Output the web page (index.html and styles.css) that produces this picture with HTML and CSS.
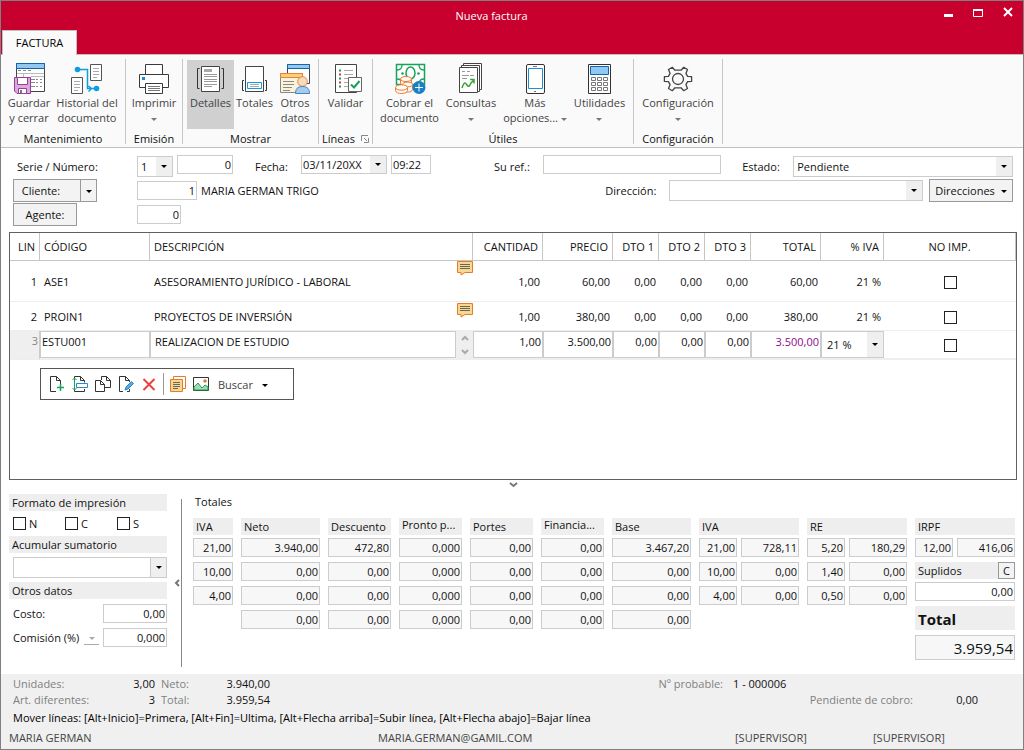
FILE: index.html
```
<!DOCTYPE html>
<html lang="es">
<head>
<meta charset="utf-8">
<title>Nueva factura</title>
<link rel="stylesheet" href="styles.css">
</head>
<body>
<div class="window">
  <header class="titlebar">
    <div class="title-row">
      <h1 class="title">Nueva factura</h1>
      <div class="win-controls">
        <button type="button" class="win-btn" aria-label="Minimizar"><svg width="12" height="12" viewBox="0 0 12 12"><path d="M2 7h9v3h-9z" fill="#fff"/></svg></button>
        <button type="button" class="win-btn" aria-label="Maximizar"><svg width="12" height="12" viewBox="0 0 12 12"><path d="M1.500 3.500h9v6h-9z" fill="none" stroke="#fff"/><path d="M1 2h10v2H1z" fill="#fff"/></svg></button>
        <button type="button" class="win-btn" aria-label="Cerrar"><svg width="12" height="12" viewBox="0 0 12 12"><path d="M2 1l8 8M10 1l-8 8" fill="none" stroke="#fff" stroke-width="2"/></svg></button>
      </div>
    </div>
    <nav class="tabs"><button type="button" class="tab">FACTURA</button></nav>
  </header>

  <div class="ribbon">
    <section class="group g-mant">
      <div class="tools">
        <button type="button" class="tool t-guardar">
          <svg width="32" height="32" viewBox="0 0 32 32" fill="none"><path d="M3.500 1.500h28v28h-28z" fill="#fff" stroke="#444"/><path d="M3.500 1.500h28v5h-28z" fill="#92c8f0" stroke="#1464ac"/><path d="M5 8.500h3M10 8.500h3M15 8.500h3M18 17.500h4M23 17.500h2M27 17.500h2M18 20.500h4M23 20.500h2M27 20.500h2M18 24.500h4M23 24.500h2M27 24.500h2" stroke="#888"/><path d="M4 11.500h27M10.500 11v4M18 14.500h13" stroke="#bbb"/><path d="M1.500 15.500h16v16H4l-2.500-2.500z" fill="#dda9dc" stroke="#92409a"/><path d="M4.500 15.500h10v7h-10zM5.500 26.500h8v5h-8z" fill="#fff" stroke="#92409a"/><path d="M8 28v3" stroke="#777" stroke-width="2"/></svg>
          <span>Guardar<br>y cerrar</span></button>
        <button type="button" class="tool t-hist">
          <svg width="32" height="32" viewBox="0 0 32 32" fill="none"><path d="M19.500 2.500h11v16h-11zM.5 15.500h11v16H.5z" fill="#fff" stroke="#555"/><path d="M22 6.500h6M22 9.500h6M22 12.500h6M22 15.500h4M3 19.500h6M3 22.500h6M3 25.500h6M3 28.500h4" stroke="#aaa"/><path d="M6 7.500h10.500v19H26M17.500 24l3 2.500-3 3" stroke="#0c9ee0" stroke-width="1.500"/><circle cx="6.500" cy="7.500" r="2.800" fill="#0c9ee0"/><circle cx="25.500" cy="26.500" r="2.800" fill="#0c9ee0"/></svg>
          <span>Historial del<br>documento</span></button>
      </div>
      <h2>Mantenimiento</h2>
    </section>
    <section class="group g-emis">
      <div class="tools">
        <button type="button" class="tool t-wide">
          <svg width="32" height="32" viewBox="0 0 32 32" fill="none" stroke="#3a3a3a"><path d="M7.500 12.500v-10h17v10" fill="#fff"/><path d="M7.500 25.500h-6v-13h29v13h-6" fill="#fff"/><path d="M7.500 21.500h17v10h-17z" fill="#fff"/><path d="M10 24.500h12M10 26.500h12M10 28.500h12" stroke="#777"/><path d="M4 15h3v3H4z" fill="#1f8dd2" stroke="none"/></svg>
          <span>Imprimir<br><i class="caret"></i></span></button>
      </div>
      <h2>Emisión</h2>
    </section>
    <section class="group g-most">
      <div class="tools">
        <button type="button" class="tool t-det active" aria-pressed="true">
          <svg width="32" height="32" viewBox="0 0 32 32" fill="none"><path d="M6.500 4.500h18v25h-18z" fill="#fff" stroke="#444"/><path d="M9 7h8v3H9z" fill="#aaa"/><path d="M9 12.500h13M9 14.500h13M9 17.500h13M9 19.500h13M9 22.500h13M9 24.500h8" stroke="#999"/><path d="M4.500 6.500h-2v20h2M26.500 6.500h2v20h-2" stroke="#333"/></svg>
          <span>Detalles</span></button>
        <button type="button" class="tool t-tot">
          <svg width="32" height="32" viewBox="0 0 32 32" fill="none"><path d="M6.500 4.500h18v25h-18z" fill="#fff" stroke="#444"/><path d="M8.500 20.500h14v6h-14z" fill="#fff" stroke="#0c9ee0"/><path d="M11 22.500h9M11 24.500h9" stroke="#aaa"/><path d="M5 18.500H3.500v10H5M26 18.500h1.500v10H26" stroke="#333"/></svg>
          <span>Totales</span></button>
        <button type="button" class="tool t-otros">
          <svg width="32" height="32" viewBox="0 0 32 32" fill="none"><path d="M8.500 2.500h22v19h-22z" fill="#fff" stroke="#444"/><path d="M8.500 2.500h22v4h-22z" fill="#92c8f0" stroke="#1464ac"/><path d="M1.500 11.500h22v19h-22z" fill="#fcf3da" stroke="#888"/><path d="M1.500 11.500h22v4h-22z" fill="#f8cf77" stroke="#e88239"/><path d="M4 19.500h11M4 22.500h11M4 25.500h9M4 28.500h7" stroke="#888"/><circle cx="23.500" cy="19.500" r="4.800" fill="#fadab8" stroke="#d58a55"/><path d="M16.500 31.500c0-4.500 2-7 7-7s7 2.500 7 7z" fill="#a7cbea" stroke="#4287c0"/></svg>
          <span>Otros<br>datos</span></button>
      </div>
      <h2>Mostrar</h2>
    </section>
    <section class="group g-lin">
      <div class="tools">
        <button type="button" class="tool t-wide">
          <svg width="32" height="32" viewBox="0 0 32 32" fill="none"><path d="M5.500 2.500h21v28h-21z" fill="#fff" stroke="#444"/><path d="M14 8.500h9M14 12.500h9M14 16.500h6M14 20.500h4M14 24.500h4" stroke="#aaa"/><path d="M9 8.500h2M9 16.500h2M9 24.500h2" stroke="#17a05a" stroke-width="2"/><path d="M9 12.500h2M9 20.500h2" stroke="#d8304c" stroke-width="2"/><path d="M18.500 15.500h13v14h-13z" fill="#fff" stroke="#666"/><path d="M21 22.500l3 3 5.500-6.500" stroke="#17a05a" stroke-width="2"/></svg>
          <span>Validar</span></button>
      </div>
      <h2>Líneas <svg width="8" height="8" viewBox="0 0 8 8" fill="none" stroke="#888"><path d="M.5 6V.5H7M3 3l3 3M7.500 3v4.500H3"/></svg></h2>
    </section>
    <section class="group g-util">
      <div class="tools">
        <button type="button" class="tool t-cobrar">
          <svg width="32" height="32" viewBox="0 0 32 32" fill="none"><path d="M2.500 2.500h28v20h-28z" fill="#fff" stroke="#18a35b" stroke-width="1.500"/><path d="M3 8c3 0 5-2 5-5M25 3c0 3 2 5 5 5M3 17c3 0 5 2 5 5M25 22c0-3 2-5 5-5" stroke="#18a35b" stroke-width="1.300"/><ellipse cx="16.500" cy="11" rx="4.500" ry="6" stroke="#18a35b" stroke-width="1.500"/><circle cx="8.500" cy="11.500" r="1.300" fill="#18a35b"/><circle cx="24.500" cy="11.500" r="1.300" fill="#18a35b"/><g fill="#fffaf4" stroke="#e97c34"><path d="M6.500 17v4c0 3.500 11 3.500 11 0v-4"/><ellipse cx="12" cy="17" rx="5.500" ry="2.500"/><path d="M8.500 22.500v5c0 3.500 10 3.500 10 0v-5"/><ellipse cx="13.500" cy="22.500" rx="5" ry="2.300"/><path d="M1.500 25.500v3c0 4 12 4 12 0v-3"/><ellipse cx="7.500" cy="25.500" rx="6" ry="2.700"/></g><circle cx="25" cy="25.500" r="6.500" fill="#1681c4"/><path d="M21 25.500h8M25 21.500v8" stroke="#fff"/></svg>
          <span>Cobrar el<br>documento</span></button>
        <button type="button" class="tool t-cons">
          <svg width="32" height="32" viewBox="0 0 32 32" fill="none"><g fill="#fff" stroke="#444"><path d="M8.500 1.500h18v26h-18z"/><path d="M6.500 3.500h18v26h-18z"/><path d="M4.500 5.500h18v25h-18z"/></g><path d="M7 9.500h3M12 9.500h3M7 13.500h7M15 13.500h4M7 16.500h5" stroke="#999"/><path d="M7 26c2-6 3-6 5-3s3 0 4-2l3-3M15 17.500h4v4" stroke="#3aa536" stroke-width="1.500"/></svg>
          <span>Consultas<br><i class="caret"></i></span></button>
        <button type="button" class="tool t-mas">
          <svg width="32" height="32" viewBox="0 0 32 32" fill="none"><rect x="7.500" y="2.500" width="18" height="29" rx="1.500" fill="#fff" stroke="#333"/><path d="M9.500 6.500h14v20h-14z" fill="#fff" stroke="#1f8dd2"/><path d="M14 4.500h4M15 29.500h2" stroke="#777"/></svg>
          <span>Más<br>opciones... <i class="caret"></i></span></button>
        <button type="button" class="tool t-utl">
          <svg width="32" height="32" viewBox="0 0 32 32" fill="none"><path d="M4.500 2.500h22v29h-22z" fill="#fff" stroke="#333"/><path d="M6.500 4.500h18v8h-18z" fill="#8fc8f2" stroke="#1464ac"/><path d="M7.500 15.500h4v3h-4zM13.500 15.500h4v3h-4zM19.500 15.500h4v3h-4zM7.500 20.500h4v3h-4zM13.500 20.500h4v3h-4zM19.500 20.500h4v3h-4zM7.500 25.500h4v3h-4zM13.500 25.500h4v3h-4zM19.500 25.500h4v3h-4z" stroke="#777"/></svg>
          <span>Utilidades<br><i class="caret"></i></span></button>
      </div>
      <h2>Útiles</h2>
    </section>
    <section class="group g-conf">
      <div class="tools">
        <button type="button" class="tool t-wide">
          <svg width="32" height="32" viewBox="0 0 32 32" fill="none" stroke="#444"><path d="M29.600 14.600L29.600 19.400L25.600 19.600L23.900 22.600L25.500 26.500L21.700 28.700L19.100 25.800L12.900 25.800L10.300 28.700L6.500 26.500L8.100 22.600L6.400 19.600L2.400 19.400L2.400 14.600L6.400 14.400L8.100 11.400L6.500 7.500L10.300 5.300L12.900 8.200L19.100 8.200L21.700 5.300L25.500 7.500L23.900 11.400L25.600 14.400Z" fill="#fafafa" stroke-width="1.300" stroke-linejoin="round"/><circle cx="16" cy="17" r="5.500" stroke-width="1.300"/></svg>
          <span>Configuración<br><i class="caret"></i></span></button>
      </div>
      <h2>Configuración</h2>
    </section>
  </div>

  <main>
    <form class="form">
      <div class="row">
        <label class="lead" for="serie">Serie / Número:</label>
        <span class="combo c-serie"><select id="serie"><option>1</option></select><i class="drop"></i></span>
        <input class="field num f-numero" aria-label="Número" value="0">
        <label class="l-fecha" for="fecha">Fecha:</label>
        <span class="combo c-fecha"><input id="fecha" value="03/11/20XX"><i class="drop"></i></span>
        <input class="field f-hora" aria-label="Hora" value="09:22">
        <label class="l-ref" for="ref">Su ref.:</label>
        <input class="field f-ref" id="ref">
        <label class="l-estado" for="estado">Estado:</label>
        <span class="combo c-estado"><select id="estado"><option>Pendiente</option></select><i class="drop"></i></span>
      </div>
      <div class="row">
        <div class="lead split"><button type="button" class="btn b-cliente">Cliente:</button><button type="button" class="btn b-drop" aria-label="Opciones de cliente"><i class="tri"></i></button></div>
        <input class="field num f-cliente" aria-label="Cliente" value="1">
        <span class="cliente">MARIA GERMAN TRIGO</span>
        <label class="l-dir" for="dir">Dirección:</label>
        <span class="combo c-dir"><select id="dir"></select><i class="drop"></i></span>
        <button type="button" class="btn b-dir">Direcciones <i class="tri"></i></button>
      </div>
      <div class="row">
        <div class="lead split"><button type="button" class="btn b-agente">Agente:</button></div>
        <input class="field num f-agente" aria-label="Agente" value="0">
      </div>
    </form>

    <section class="lines">
      <table>
        <colgroup><col class="k-lin"><col class="k-cod"><col><col class="k-70"><col class="k-70"><col class="k-46"><col class="k-46"><col class="k-46"><col class="k-70"><col class="k-iva"><col class="k-imp"></colgroup>
        <thead><tr><th class="num">LIN</th><th>CÓDIGO</th><th>DESCRIPCIÓN</th><th class="num">CANTIDAD</th><th class="num">PRECIO</th><th class="num">DTO 1</th><th class="num">DTO 2</th><th class="num">DTO 3</th><th class="num">TOTAL</th><th class="num">% IVA</th><th class="mid">NO IMP.</th></tr></thead>
        <tbody>
          <tr class="tall"><td class="num">1</td><td>ASE1</td><td><div class="desc"><span>ASESORAMIENTO JURÍDICO - LABORAL</span><svg class="note" width="16" height="15" viewBox="0 0 16 15"><path d="M.5 .5h15v11H8l-4 2.500v-2.500H.5z" fill="#f9d88b" stroke="#e47a34"/><path d="M3 3.500h10M3 5.500h10M3 7.500h10" stroke="#666"/></svg></div></td><td class="num">1,00</td><td class="num">60,00</td><td class="num">0,00</td><td class="num">0,00</td><td class="num">0,00</td><td class="num">60,00</td><td class="num">21 %</td><td class="mid"><input type="checkbox" aria-label="No imprimir línea 1"></td></tr>
          <tr class="short"><td class="num">2</td><td>PROIN1</td><td><div class="desc"><span>PROYECTOS DE INVERSIÓN</span><svg class="note" width="16" height="15" viewBox="0 0 16 15"><path d="M.5 .5h15v11H8l-4 2.500v-2.500H.5z" fill="#f9d88b" stroke="#e47a34"/><path d="M3 3.500h10M3 5.500h10M3 7.500h10" stroke="#666"/></svg></div></td><td class="num">1,00</td><td class="num">380,00</td><td class="num">0,00</td><td class="num">0,00</td><td class="num">0,00</td><td class="num">380,00</td><td class="num">21 %</td><td class="mid"><input type="checkbox" aria-label="No imprimir línea 2"></td></tr>
          <tr class="edit"><td class="num lin">3</td><td><input class="cell" aria-label="Código" value="ESTU001"></td><td><div class="desc-edit"><input class="cell" aria-label="Descripción" value="REALIZACION DE ESTUDIO"><span class="spin"><svg width="10" height="20" viewBox="0 0 10 20" fill="none" stroke="#aaa" stroke-width="2"><path d="M2 5l3-3 3 3M2 15l3 3 3-3"/></svg></span></div></td><td><input class="cell num" aria-label="Cantidad" value="1,00"></td><td><input class="cell num" aria-label="Precio" value="3.500,00"></td><td><input class="cell num" aria-label="Dto 1" value="0,00"></td><td><input class="cell num" aria-label="Dto 2" value="0,00"></td><td><input class="cell num" aria-label="Dto 3" value="0,00"></td><td><input class="cell num total" aria-label="Total" value="3.500,00"></td><td><span class="combo c-iva"><select aria-label="% IVA"><option>21 %</option></select><i class="drop"></i></span></td><td class="mid white"><input type="checkbox" aria-label="No imprimir línea 3"></td></tr>
        </tbody>
      </table>
      <div class="linebar" role="toolbar" aria-label="Línea">
        <button type="button" aria-label="Nueva línea"><svg width="16" height="16" viewBox="0 0 16 16" fill="none"><path d="M7 15.500H1.500V.5h6l4 4V9M7.500 .5v4h4" stroke="#333"/><path d="M8 11.500h7M11.500 8v7" stroke="#18a35b" stroke-width="1.500"/></svg></button>
        <button type="button" aria-label="Insertar línea"><svg width="16" height="16" viewBox="0 0 16 16" fill="none"><path d="M2.500 4.500v-4h6l4 4v2M8.500 .5v4h4M2.500 13v2.500h10V13" stroke="#333"/><path d="M4.500 7.500h11v4h-11z" stroke="#1f8dd2" fill="#fff"/><path d="M2.500 2v12M.5 4l2-2 2 2M.5 12l2 2 2-2" stroke="#18a35b"/></svg></button>
        <button type="button" aria-label="Duplicar línea"><svg width="16" height="16" viewBox="0 0 16 16" fill="none" stroke="#333"><path d="M6.500 4V.5h5l4 4v7H10M11.500 .5v4h4"/><path d="M.5 4.500h5l4 4v7h-9zM5.500 4.500v4h4" fill="#fff"/></svg></button>
        <button type="button" aria-label="Modificar línea"><svg width="16" height="16" viewBox="0 0 16 16" fill="none"><path d="M5 15.500H1.500V.5h6l4 4V6M7.500 .5v4h4M9 15.500h2.500V13" stroke="#333"/><path d="M7 14l1-3 5.500-5.500 2 2L10 13z" fill="#5aa9e4" stroke="#2a84c8"/></svg></button>
        <button type="button" aria-label="Eliminar línea"><svg width="16" height="16" viewBox="0 0 16 16" fill="none"><path d="M2.500 3l11 11M13.500 3l-11 11" stroke="#e8423e" stroke-width="2"/></svg></button>
        <i class="bar"></i>
        <button type="button" aria-label="Notas"><svg width="16" height="16" viewBox="0 0 16 16" fill="none"><path d="M3.500 3V.5h12v12H13" stroke="#e47a34"/><path d="M.5 3.500h12v12H.5z" fill="#f9d88b" stroke="#e47a34"/><path d="M3 6.500h7M3 8.500h7M3 10.500h7M3 12.500h5" stroke="#666"/></svg></button>
        <button type="button" aria-label="Imagen"><svg width="16" height="16" viewBox="0 0 16 16" fill="none"><path d="M.5 1.500h15v13H.5z" fill="#fff" stroke="#333"/><path d="M1 11l4-4 4 5 3-3 3 2v3H1z" fill="#a7d8b4" stroke="#18a35b"/><circle cx="12" cy="5" r="1.800" fill="#e47a34"/></svg></button>
        <button type="button" class="buscar">Buscar <i class="tri"></i></button>
      </div>
    </section>

    <div class="fold"><svg width="9" height="6" viewBox="0 0 9 6" fill="none" stroke="#777" stroke-width="2"><path d="M1 1l3.500 3L8 1"/></svg></div>

    <div class="bottom">
      <aside class="side">
        <h3 class="head">Formato de impresión</h3>
        <div class="checks"><label><input type="checkbox">N</label><label><input type="checkbox">C</label><label><input type="checkbox">S</label></div>
        <h3 class="head">Acumular sumatorio</h3>
        <span class="combo c-acum"><select aria-label="Acumular sumatorio"></select><i class="drop"></i></span>
        <h3 class="head">Otros datos</h3>
        <div class="pair"><label for="costo">Costo:</label><input class="field num" id="costo" value="0,00"></div>
        <div class="pair"><label for="comis">Comisión (%)</label><button type="button" class="mini" aria-label="Tipo de comisión"><i class="caret"></i></button><input class="field num" id="comis" value="0,000"></div>
      </aside>
      <div class="divider"><svg width="6" height="8" viewBox="0 0 6 8" fill="none" stroke="#777" stroke-width="2"><path d="M5 1L2 4l3 3"/></svg></div>
      <section class="totals">
        <h3>Totales</h3>
        <div class="cols">
          <div class="col"><h4 class="head">IVA</h4><input class="ro" readonly aria-label="IVA 1" value="21,00"><input class="ro" readonly aria-label="IVA 2" value="10,00"><input class="ro" readonly aria-label="IVA 3" value="4,00"></div>
          <div class="col"><h4 class="head">Neto</h4><input class="ro" readonly aria-label="Neto 1" value="3.940,00"><input class="ro" readonly aria-label="Neto 2" value="0,00"><input class="ro" readonly aria-label="Neto 3" value="0,00"><input class="ro" readonly aria-label="Neto 4" value="0,00"></div>
          <div class="col"><h4 class="head">Descuento</h4><input class="ro" readonly aria-label="Descuento 1" value="472,80"><input class="ro" readonly aria-label="Descuento 2" value="0,00"><input class="ro" readonly aria-label="Descuento 3" value="0,00"><input class="ro" readonly aria-label="Descuento 4" value="0,00"></div>
          <div class="col"><h4 class="head high">Pronto p...</h4><input class="ro" readonly aria-label="Pronto pago 1" value="0,000"><input class="ro" readonly aria-label="Pronto pago 2" value="0,000"><input class="ro" readonly aria-label="Pronto pago 3" value="0,000"><input class="ro" readonly aria-label="Pronto pago 4" value="0,000"></div>
          <div class="col"><h4 class="head">Portes</h4><input class="ro" readonly aria-label="Portes 1" value="0,00"><input class="ro" readonly aria-label="Portes 2" value="0,00"><input class="ro" readonly aria-label="Portes 3" value="0,00"><input class="ro" readonly aria-label="Portes 4" value="0,00"></div>
          <div class="col"><h4 class="head high">Financia...</h4><input class="ro" readonly aria-label="Financiación 1" value="0,00"><input class="ro" readonly aria-label="Financiación 2" value="0,00"><input class="ro" readonly aria-label="Financiación 3" value="0,00"><input class="ro" readonly aria-label="Financiación 4" value="0,00"></div>
          <div class="col"><h4 class="head">Base</h4><input class="ro" readonly aria-label="Base 1" value="3.467,20"><input class="ro" readonly aria-label="Base 2" value="0,00"><input class="ro" readonly aria-label="Base 3" value="0,00"><input class="ro" readonly aria-label="Base 4" value="0,00"></div>
          <div class="col"><h4 class="head">IVA</h4>
            <div class="two"><input class="ro" readonly aria-label="Tipo IVA 1" value="21,00"><input class="ro" readonly aria-label="Cuota IVA 1" value="728,11"></div>
            <div class="two"><input class="ro" readonly aria-label="Tipo IVA 2" value="10,00"><input class="ro" readonly aria-label="Cuota IVA 2" value="0,00"></div>
            <div class="two"><input class="ro" readonly aria-label="Tipo IVA 3" value="4,00"><input class="ro" readonly aria-label="Cuota IVA 3" value="0,00"></div></div>
          <div class="col"><h4 class="head">RE</h4>
            <div class="two"><input class="ro" readonly aria-label="Tipo RE 1" value="5,20"><input class="ro" readonly aria-label="Cuota RE 1" value="180,29"></div>
            <div class="two"><input class="ro" readonly aria-label="Tipo RE 2" value="1,40"><input class="ro" readonly aria-label="Cuota RE 2" value="0,00"></div>
            <div class="two"><input class="ro" readonly aria-label="Tipo RE 3" value="0,50"><input class="ro" readonly aria-label="Cuota RE 3" value="0,00"></div></div>
          <div class="col"><h4 class="head">IRPF</h4>
            <div class="two"><input class="ro" readonly aria-label="Tipo IRPF" value="12,00"><input class="ro" readonly aria-label="Cuota IRPF" value="416,06"></div>
            <div class="head suplidos"><label for="suplidos">Suplidos</label><button type="button" class="btn b-c">C</button></div>
            <input class="ro supl" id="suplidos" value="0,00">
            <label class="head grand" for="total">Total</label>
            <input class="ro big" readonly id="total" value="3.959,54"></div>
        </div>
      </section>
    </div>
  </main>

  <footer class="status">
    <dl class="facts">
      <dt>Unidades:</dt><dd>3,00</dd><dt>Neto:</dt><dd>3.940,00</dd><dt class="end">Nº probable:</dt><dd class="start">1 - 000006</dd>
    </dl>
    <dl class="facts second">
      <dt>Art. diferentes:</dt><dd>3</dd><dt>Total:</dt><dd>3.959,54</dd><dt class="end">Pendiente de cobro:</dt><dd>0,00</dd>
    </dl>
    <p class="hint">Mover líneas: [Alt+Inicio]=Primera, [Alt+Fin]=Ultima, [Alt+Flecha arriba]=Subir línea, [Alt+Flecha abajo]=Bajar línea</p>
    <div class="users"><span>MARIA GERMAN</span><span>MARIA.GERMAN@GAMIL.COM</span><span>[SUPERVISOR]</span><span>[SUPERVISOR]</span></div>
  </footer>
</div>
</body>
</html>
```
FILE: styles.css
```
* { box-sizing: border-box; }
body { margin: 0; background: #fff; color: #111; font: 11px/15px "Open Sans", "Noto Sans", sans-serif; }
button, input, select { font: inherit; color: inherit; margin: 0; padding: 0; border: 0; border-radius: 0; background: none; min-width: 0; }
select { appearance: none; }
h1, h2, h3, h4, p, dl, dt, dd { margin: 0; font-size: inherit; font-weight: 400; }
svg { display: block; flex: none; }
.num { text-align: right; }
.window { min-height: 100vh; display: flex; flex-direction: column; border: 1px solid #808080; }

/* title bar */
.titlebar { background: #c8002d; border-bottom: 1px solid #d0b8bd; height: 54px; display: flex; flex-direction: column; justify-content: space-between; }
.title-row { display: flex; align-items: center; height: 29px; padding-left: 40px; }
.title { flex: 1; text-align: center; color: #fff; font-size: 11px; }
.win-controls { display: flex; gap: 18px; padding-right: 9px; padding-bottom: 6px; }
.win-btn { width: 12px; height: 12px; }
.tabs { height: 25px; margin-bottom: -1px; padding-left: 1px; }
.tab { display: block; height: 25px; width: 75px; background: #fafafa; border: 1px solid #c0c0c0; border-bottom: 0; color: #000; padding-bottom: 2px; }

/* ribbon */
.ribbon { display: flex; background: #fafafa; border-bottom: 1px solid #c0c0c0; height: 93px; padding: 4px 0 3px; }
.group { display: flex; flex-direction: column; border-right: 1px solid #c6c6c6; }
.group h2 { display: flex; justify-content: center; align-items: center; gap: 6px; height: 19px; margin-bottom: -4px; flex: none; }
.tools { display: flex; height: 69px; margin-top: 1px; flex: none; }
.tool { display: flex; flex-direction: column; align-items: center; gap: 1px; padding-top: 2px; color: #444; line-height: 15px; white-space: nowrap; }
.active { background: #d0d0d0; }
.caret { display: inline-block; border: solid transparent; border-width: 3px 3px 0; border-top-color: #777; vertical-align: middle; }
.g-mant { width: 125px; } .g-mant .tools { padding-left: 2px; }
.g-emis { width: 57px; } .g-most { width: 136px; } .g-lin { width: 54px; } .g-util { width: 261px; } .g-conf { width: 89px; }
.g-most .tools { padding-left: 4px; } .g-util .tools { padding-left: 3px; }
.t-wide { width: 100%; } .t-guardar { width: 52px; } .t-hist { width: 64px; }
.t-det { width: 47px; } .t-tot { width: 41px; } .t-otros { width: 40px; }
.t-cobrar { width: 67px; } .t-cons { width: 56px; } .t-mas { width: 72px; } .t-utl { width: 57px; }

main { flex: 1; display: flex; flex-direction: column; padding: 0 6px 0 8px; }

/* header form */
.form { padding: 6px 4px 6px 4px; }
.row { display: flex; align-items: center; height: 24px; }
.lead { width: 124px; flex: none; }
label.lead { padding-left: 4px; }
.split { display: flex; }
.field { height: 19px; border: 1px solid #ccc; padding: 0 3px; background: #fff; }
.combo { display: flex; height: 21px; border: 1px solid #ccc; background: #fff; }
.combo select, .combo input { flex: 1; width: 0; padding: 0 3px; outline: 0; }
.drop { width: 16px; background: #efefef; display: flex; align-items: center; justify-content: center; flex: none; }
.drop::before, .tri { content: ""; border: solid transparent; border-width: 3px 3px 0; border-top-color: #000; display: inline-block; vertical-align: middle; }
.btn { background: #f3f3f3; border: 1px solid #999; height: 23px; text-align: center; }
.c-serie { width: 36px; } .f-numero { width: 56px; margin-left: 4px; padding-right: 1px; }
.l-fecha { width: 68px; padding-left: 22px; } .c-fecha { width: 86px; } .c-fecha input { padding: 0 1px; }
.f-hora { width: 40px; margin-left: 4px; padding: 0 1px; }
.c-fecha, .f-hora, .f-numero, .f-ref { height: 19px; align-self: flex-start; margin-top: 1px; }
.l-ref { width: 112px; padding-left: 63px; } .f-ref { flex: 178; padding: 0; }
.l-estado { width: 72px; padding-left: 21px; } .c-estado { flex: 220; }
.b-cliente { width: 68px; padding-right: 12px; } .b-drop { width: 17px; margin-left: -1px; }
.b-agente { width: 64px; }
.f-cliente { width: 60px; padding-right: 1px; } .f-agente { width: 44px; padding-right: 1px; }
.cliente { flex: 408; padding-left: 4px; } .l-dir { width: 64px; }
.c-dir { flex: 254; } .b-dir { width: 84px; margin-left: 6px; }
.b-dir .tri { margin-left: 3px; }

/* invoice lines */
.lines { border: 1px solid #606060; height: 248px; flex: none; }
table { width: 100%; table-layout: fixed; border-collapse: separate; border-spacing: 0; }
.k-lin { width: 30px; } .k-cod { width: 110px; } .k-70 { width: 70px; } .k-46 { width: 46px; } .k-iva { width: 63px; } .k-imp { width: 132px; }
th { font-weight: 400; text-align: left; height: 28px; padding: 0 4px; border-right: 1px solid #c6c6c6; border-bottom: 1px solid #c6c6c6; white-space: nowrap; }
th.num { text-align: right; } th.mid, td.mid { text-align: center; }
td { padding: 0 4px; border-bottom: 1px solid #eee; }
td.num { padding-right: 3px; }
.tall td { height: 41px; } .short td { height: 29px; }
.desc { display: flex; justify-content: space-between; align-items: center; margin-right: -4px; height: 100%; }
.note { align-self: flex-start; }
.tall .desc { height: 40px; } .short .desc { height: 27px; }
.edit td { padding: 0; height: 29px; background: #efefef; border-bottom: 2px solid #eee; }
.edit .lin { color: #888; padding: 0 1px 8px 0; border-right: 1px solid #ccc; }
.edit .white { background: #fff; }
.cell { display: block; width: 100%; height: 27px; border: 1px solid #ccc; background: #fff; padding: 0 1px 7px; }
.desc-edit { display: flex; } .desc-edit .cell { padding-left: 4px; }
.spin { width: 17px; flex: none; display: flex; align-items: center; justify-content: center; }
.total { color: #8b0a8b; }
.c-iva { height: 27px; } .c-iva select { padding-left: 5px; }
input[type="checkbox"] { appearance: none; width: 13px; height: 13px; border: 1px solid #222; background: #fff; vertical-align: middle; flex: none; }
.linebar { display: flex; align-items: center; gap: 7px; width: 254px; height: 32px; margin: 8px 0 0 30px; padding-left: 8px; border: 1px solid #555; }
.linebar button:not(.buscar) { width: 16px; height: 16px; }
.bar { width: 1px; height: 22px; background: #999; margin: 0 -1px; }
.linebar .buscar { color: #444; margin-left: 2px; } .buscar .tri { margin-left: 6px; }

.fold { display: flex; justify-content: center; padding-top: 2px; height: 10px; }

/* lower area */
.bottom { display: flex; flex: 1; padding-top: 4px; }
.head { background: #eee; height: 17px; line-height: 17px; padding-left: 3px; white-space: nowrap; }
.side { width: 158px; flex: none; display: flex; flex-direction: column; }
.checks { display: flex; height: 25px; align-items: center; padding-left: 4px; }
.checks label { display: flex; align-items: center; gap: 3px; width: 52px; flex: none; }
.c-acum { margin: 4px 0 4px 4px; } .c-acum .drop { border-left: 1px solid #ccc; }
.pair { display: flex; align-items: center; padding-left: 4px; margin-top: 5px; }
.pair label { flex: 1; white-space: nowrap; }
.pair .field { width: 64px; padding-right: 1px; }
.mini { width: 15px; height: 14px; border-bottom: 1px solid #aaa; margin-right: 4px; line-height: 8px; }
.mini .caret { border-top-color: #aaa; }
.divider { width: 15px; margin: 5px 11px 7px 0; border-right: 1px solid #888; display: flex; align-items: center; justify-content: flex-start; padding-left: 7px; flex: none; }
.totals { flex: 1; }
.totals h3 { padding-left: 2px; height: 24px; line-height: 15px; }
.cols { display: grid; grid-template-columns: 40fr 79fr 63fr 63fr 63fr 63fr 79fr 100fr 100fr 100fr; gap: 8px; align-items: start; padding-right: 2px; }
.col { display: flex; flex-direction: column; gap: 5px; min-width: 0; }
.col .head { margin-bottom: -2px; }
.col .high { line-height: 14px; }
.ro { width: 100%; height: 19px; border: 1px solid #ccc; background: #f7f7f7; text-align: right; padding: 0 1px; }
.two { display: grid; grid-template-columns: 38fr 58fr; gap: 4px; }
.suplidos { display: flex; justify-content: space-between; }
.b-c { width: 17px; height: 17px; line-height: 15px; }
.supl { background: #fff; }
.col .grand { height: 24px; line-height: 26px; font-size: 15px; font-weight: 700; margin-bottom: 0; }
.big { height: 25px; font-size: 15px; }

/* status bar */
.status { background: #f0f0f0; height: 75px; padding: 2px 8px 0; }
.facts { display: grid; grid-template-columns: 98px 44px 46px 69px 1fr 255px; height: 16px; line-height: 16px; padding: 0 37px 0 4px; }
.facts.second { grid-template-columns: 98px 44px 46px 69px 1fr 65px; }
.facts dt { color: #808080; } .facts dd { text-align: right; }
.facts dt:nth-of-type(2) { padding-left: 6px; }
.facts .end { text-align: right; } .facts .start { text-align: left; padding-left: 10px; }
.hint { padding-left: 4px; height: 20px; line-height: 20px; color: #000; }
.users { display: grid; grid-template-columns: 369fr 357fr 138fr 142fr; color: #444; line-height: 19px; }
```
